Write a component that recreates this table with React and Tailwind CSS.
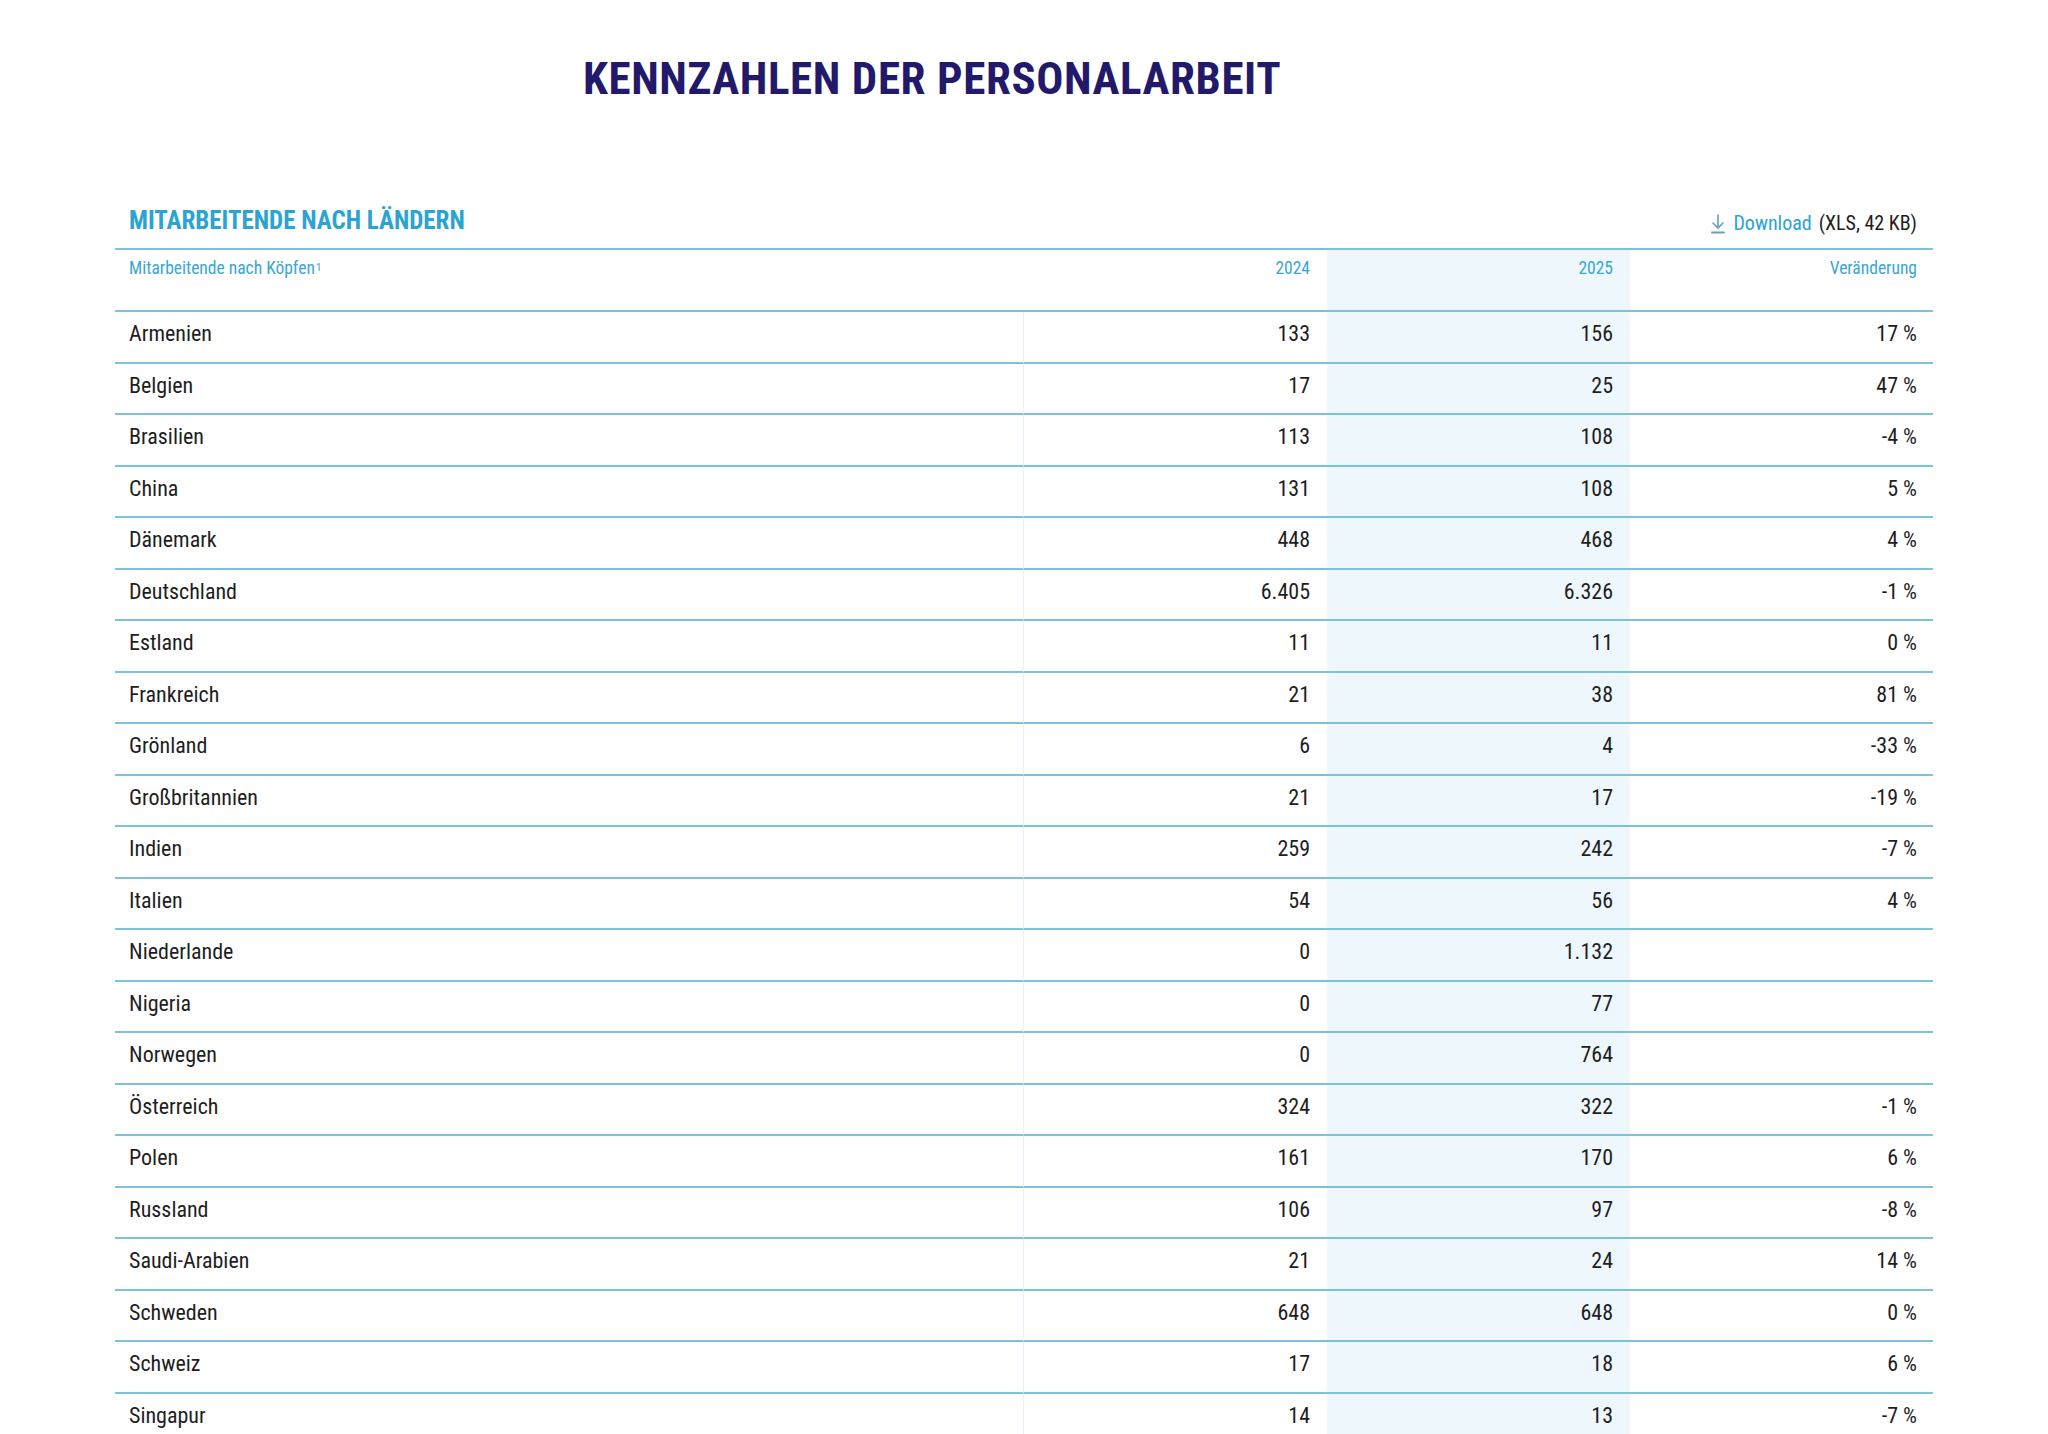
import React from 'react';

const rows = [
  ['Armenien', '133', '156', '17 %'],
  ['Belgien', '17', '25', '47 %'],
  ['Brasilien', '113', '108', '-4 %'],
  ['China', '131', '108', '5 %'],
  ['Dänemark', '448', '468', '4 %'],
  ['Deutschland', '6.405', '6.326', '-1 %'],
  ['Estland', '11', '11', '0 %'],
  ['Frankreich', '21', '38', '81 %'],
  ['Grönland', '6', '4', '-33 %'],
  ['Großbritannien', '21', '17', '-19 %'],
  ['Indien', '259', '242', '-7 %'],
  ['Italien', '54', '56', '4 %'],
  ['Niederlande', '0', '1.132', ''],
  ['Nigeria', '0', '77', ''],
  ['Norwegen', '0', '764', ''],
  ['Österreich', '324', '322', '-1 %'],
  ['Polen', '161', '170', '6 %'],
  ['Russland', '106', '97', '-8 %'],
  ['Saudi-Arabien', '21', '24', '14 %'],
  ['Schweden', '648', '648', '0 %'],
  ['Schweiz', '17', '18', '6 %'],
  ['Singapur', '14', '13', '-7 %'],
];

const DownloadIcon = () => (
  <svg width="16" height="21" viewBox="0 0 16 21" fill="none" stroke="#6a9fb8" strokeWidth="1.6" strokeLinecap="round">
    <path d="M8 2v12.5M3 10l5 5 5-5" />
    <path d="M2 19.5h12" strokeWidth="1.8" />
  </svg>
);

const line = 'border-b-2 border-[#7dc1da]';

export default function App() {
  return (
    <div className="min-h-screen bg-white font-['Roboto_Condensed','Roboto',sans-serif] text-[#1e1e1e]">
      <div className="pl-[583px] pt-[55px] pb-[103px]">
        <h1 className="text-[45px] leading-[48px] font-bold tracking-[0.6px] text-[#22196b]">
          KENNZAHLEN DER PERSONALARBEIT
        </h1>
      </div>

      <div className="mx-[115px]">
        <div className="flex items-end justify-between px-[14px] pb-[12px]">
          <h2 className="text-[25px] leading-[30px] font-bold text-[#2ba3d3]">
            MITARBEITENDE NACH LÄNDERN
          </h2>
          <div className="flex items-center gap-[7px] pr-[2px] pb-[1px] text-[20px] leading-[24px]">
            <DownloadIcon />
            <span className="text-[#2ba3d3]">Download</span>
            <span>(XLS, 42 KB)</span>
          </div>
        </div>

        <div className="grid grid-cols-[3fr_1fr_1fr_1fr] border-t-2 border-[#7dc1da]">
          <div className={`h-[62px] ${line} px-[14px] pt-[7px] text-[17.5px] leading-[22px] text-[#3aa6d2]`}>
            Mitarbeitende nach Köpfen<sup className="text-[11px] relative -top-[3px] ml-[1px]">1</sup>
          </div>
          <div className={`h-[62px] ${line} px-[17px] pt-[7px] text-right text-[17.5px] leading-[22px] text-[#3aa6d2]`}>
            2024
          </div>
          <div className={`h-[62px] ${line} bg-[#eef7fc] px-[17px] pt-[7px] text-right text-[17.5px] leading-[22px] text-[#3aa6d2]`}>
            2025
          </div>
          <div className={`h-[62px] ${line} px-[16px] pt-[7px] text-right text-[17.5px] leading-[22px] text-[#3aa6d2]`}>
            Veränderung
          </div>

          {rows.map(([name, a, b, c]) => (
            <React.Fragment key={name}>
              <div className={`h-[51.5px] flex items-center ${line} border-r border-r-[#e8f3f9] px-[14px] pb-[6px] text-[22px]`}>
                {name}
              </div>
              <div className={`h-[51.5px] flex items-center justify-end ${line} px-[17px] pb-[6px] text-[22px]`}>
                {a}
              </div>
              <div className={`h-[51.5px] flex items-center justify-end ${line} bg-[#eef7fc] px-[17px] pb-[6px] text-[22px]`}>
                {b}
              </div>
              <div className={`h-[51.5px] flex items-center justify-end ${line} px-[16px] pb-[6px] text-[22px]`}>
                {c}
              </div>
            </React.Fragment>
          ))}
        </div>
      </div>
    </div>
  );
}
